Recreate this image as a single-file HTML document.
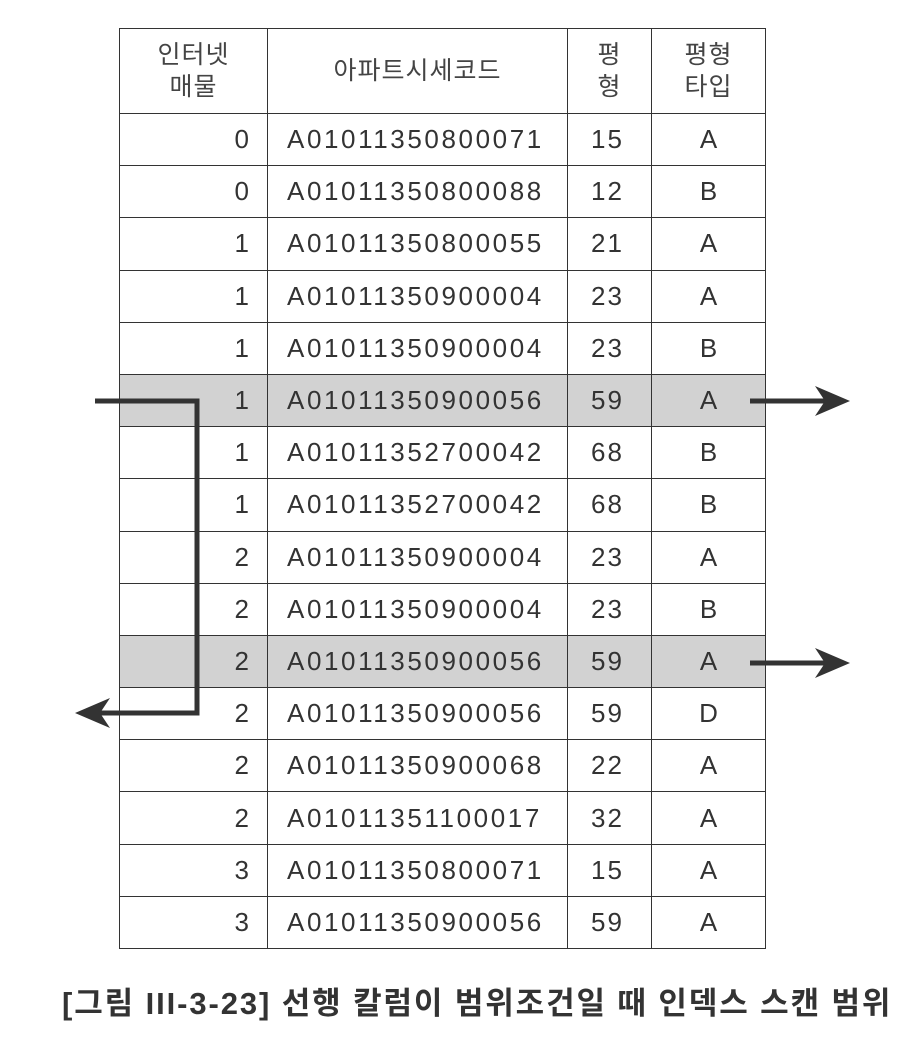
<!DOCTYPE html>
<html><head><meta charset="utf-8"><style>
body{margin:0;width:914px;height:1052px;background:#fff;position:relative;overflow:hidden;font-family:"Liberation Sans","Noto Sans CJK KR",sans-serif;color:#333}
table{position:absolute;left:119px;top:28px;border-collapse:collapse;font-size:26px}
td{border:1.5px solid #333;height:51.2px;padding:0}
tr.h td{height:84px;text-align:center;line-height:32px;font-size:25px;color:#444;letter-spacing:1px}
td.c1{width:148px;text-align:right;padding-right:18px;box-sizing:border-box}
td.c2{width:300px;padding-left:19px;box-sizing:border-box;letter-spacing:2.6px}
td.c3{width:84px;padding-left:23px;box-sizing:border-box;letter-spacing:2px}
td.c4{width:113px;text-align:center}
tr.g td{background:#d2d2d2}
.cap{position:absolute;left:62px;top:978px;font-size:31px;font-weight:bold;color:#333;white-space:nowrap;letter-spacing:1.9px}
svg{position:absolute;left:0;top:0}
</style></head><body>
<table>
<tr class="h"><td class="c1" style="text-align:center;padding:0">인터넷<br>매물</td><td class="c2" style="text-align:center;padding:0;letter-spacing:1px">아파트시세코드</td><td class="c3" style="text-align:center;padding:0">평<br>형</td><td class="c4">평형<br>타입</td></tr>
<tr><td class="c1">0</td><td class="c2">A01011350800071</td><td class="c3">15</td><td class="c4">A</td></tr>
<tr><td class="c1">0</td><td class="c2">A01011350800088</td><td class="c3">12</td><td class="c4">B</td></tr>
<tr><td class="c1">1</td><td class="c2">A01011350800055</td><td class="c3">21</td><td class="c4">A</td></tr>
<tr><td class="c1">1</td><td class="c2">A01011350900004</td><td class="c3">23</td><td class="c4">A</td></tr>
<tr><td class="c1">1</td><td class="c2">A01011350900004</td><td class="c3">23</td><td class="c4">B</td></tr>
<tr class="g"><td class="c1">1</td><td class="c2">A01011350900056</td><td class="c3">59</td><td class="c4">A</td></tr>
<tr><td class="c1">1</td><td class="c2">A01011352700042</td><td class="c3">68</td><td class="c4">B</td></tr>
<tr><td class="c1">1</td><td class="c2">A01011352700042</td><td class="c3">68</td><td class="c4">B</td></tr>
<tr><td class="c1">2</td><td class="c2">A01011350900004</td><td class="c3">23</td><td class="c4">A</td></tr>
<tr><td class="c1">2</td><td class="c2">A01011350900004</td><td class="c3">23</td><td class="c4">B</td></tr>
<tr class="g"><td class="c1">2</td><td class="c2">A01011350900056</td><td class="c3">59</td><td class="c4">A</td></tr>
<tr><td class="c1">2</td><td class="c2">A01011350900056</td><td class="c3">59</td><td class="c4">D</td></tr>
<tr><td class="c1">2</td><td class="c2">A01011350900068</td><td class="c3">22</td><td class="c4">A</td></tr>
<tr><td class="c1">2</td><td class="c2">A01011351100017</td><td class="c3">32</td><td class="c4">A</td></tr>
<tr><td class="c1">3</td><td class="c2">A01011350800071</td><td class="c3">15</td><td class="c4">A</td></tr>
<tr><td class="c1">3</td><td class="c2">A01011350900056</td><td class="c3">59</td><td class="c4">A</td></tr>
</table>
<svg width="914" height="1052">
<g stroke="#333" stroke-width="5" fill="none">
<path d="M95 401 H197 V713 H85"/>
<path d="M750 401 H835"/>
<path d="M750 663 H835"/>
</g>
<g fill="#333">
<path d="M75 713 L110 698 L100 713 L110 728 Z"/>
<path d="M850 401 L815 386 L825 401 L815 416 Z"/>
<path d="M850 663 L815 648 L825 663 L815 678 Z"/>
</g>
</svg>
<div class="cap">[그림 III-3-23] 선행 칼럼이 범위조건일 때 인덱스 스캔 범위</div>
</body></html>
